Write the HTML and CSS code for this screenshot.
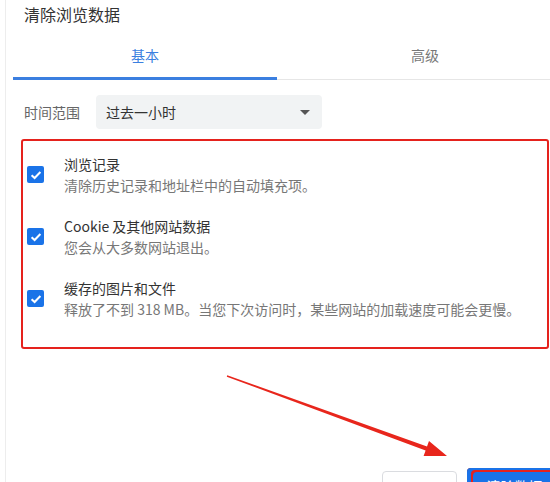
FILE: index.html
```html
<!DOCTYPE html>
<html lang="zh-CN">
<head>
<meta charset="utf-8">
<link rel="stylesheet" href="styles.css">
</head>
<body>
<div class="dialog">
  <h1 class="title">清除浏览数据</h1>
  <div class="tabs">
    <div class="tab active">基本</div>
    <div class="tab tab-wide">高级</div>
  </div>
  <div class="range-row">
    <span class="range-label">时间范围</span>
    <div class="select">
      <span>过去一小时</span>
      <span class="caret"></span>
    </div>
  </div>
  <div class="highlight">
    <div class="item">
      <span class="checkbox"><svg viewBox="0 0 16 16" width="16" height="16"><path d="M3.6 8.2 L6.6 11 L12.4 5" fill="none" stroke="#fff" stroke-width="2"/></svg></span>
      <div class="item-text">
        <div class="item-title">浏览记录</div>
        <div class="item-sub">清除历史记录和地址栏中的自动填充项。</div>
      </div>
    </div>
    <div class="item">
      <span class="checkbox"><svg viewBox="0 0 16 16" width="16" height="16"><path d="M3.6 8.2 L6.6 11 L12.4 5" fill="none" stroke="#fff" stroke-width="2"/></svg></span>
      <div class="item-text">
        <div class="item-title">Cookie 及其他网站数据</div>
        <div class="item-sub">您会从大多数网站退出。</div>
      </div>
    </div>
    <div class="item">
      <span class="checkbox"><svg viewBox="0 0 16 16" width="16" height="16"><path d="M3.6 8.2 L6.6 11 L12.4 5" fill="none" stroke="#fff" stroke-width="2"/></svg></span>
      <div class="item-text">
        <div class="item-title">缓存的图片和文件</div>
        <div class="item-sub">释放了不到 318 MB。当您下次访问时，某些网站的加载速度可能会更慢。</div>
      </div>
    </div>
  </div>
  <div class="footer">
    <button class="btn btn-cancel">取消</button>
    <button class="btn btn-primary">清除数据</button>
  </div>
</div>
<svg class="arrow" width="550" height="482" viewBox="0 0 550 482">
  <polygon points="227.2,375.3 427.0,446.6 429.0,441.0 447,456 423.6,456.0 425.6,450.4 226.8,376.7" fill="#e8261c"/>
</svg>
</body>
</html>
```

FILE: styles.css
```css
html, body {
  margin: 0;
  padding: 0;
  background: #fff;
  width: 550px;
  height: 482px;
  overflow: hidden;
  font-family: "Noto Sans CJK SC", "Noto Sans", sans-serif;
  color: #333;
}

.dialog {
  margin-left: 5px;
  border-left: 1px solid #ededed;
  height: 482px;
  display: flex;
  flex-direction: column;
}

.title {
  margin: 0;
  padding: 2px 0 0 18px;
  font-size: 16px;
  font-weight: 400;
  line-height: 24px;
  color: #333;
}

.tabs {
  display: flex;
  margin: 8px 0 0 7px;
  width: 560px;
  border-bottom: 1px solid #e6e6e6;
}

.tab {
  width: 264px;
  flex-shrink: 0;
  text-align: center;
  font-size: 14px;
  line-height: 20px;
  padding: 11px 0 12px;
  color: #777;
  border-bottom: 3px solid transparent;
  margin-bottom: -1px;
}

.tab-wide {
  width: 296px;
}

.tab.active {
  color: #3b7fe0;
  border-bottom-color: #3b7fe0;
}

.range-row {
  display: flex;
  align-items: center;
  margin: 15px 0 0 18px;
  gap: 16px;
}

.range-label {
  font-size: 14px;
  color: #666;
}

.select {
  box-sizing: border-box;
  width: 226px;
  height: 34px;
  padding: 0 10px 0 10px;
  background: #f1f3f4;
  border-radius: 4px;
  display: flex;
  align-items: center;
  justify-content: space-between;
  font-size: 14px;
  color: #333;
}

.caret {
  width: 0;
  height: 0;
  border-left: 5px solid transparent;
  border-right: 5px solid transparent;
  border-top: 5px solid #555;
  margin-right: 2px;
}

.highlight {
  margin: 10px 0 0 15px;
  width: 522px;
  border: 2.5px solid #e5221d;
  border-radius: 3px;
  padding: 13px 0 28px 2px;
  display: flex;
  flex-direction: column;
  gap: 21px;
}

.item {
  display: flex;
  align-items: center;
}

.checkbox {
  width: 17px;
  height: 17px;
  background: #1a73e8;
  border-radius: 2px;
  display: flex;
  align-items: center;
  justify-content: center;
  margin-right: 20px;
  margin-left: 2px;
}

.item-text {
  display: flex;
  flex-direction: column;
  gap: 1px;
}

.item-title {
  font-size: 14px;
  line-height: 20px;
  color: #333;
}

.item-sub {
  font-size: 14px;
  line-height: 20px;
  color: #777;
}

.footer {
  display: flex;
  justify-content: flex-end;
  align-items: flex-start;
  gap: 10px;
  margin-top: auto;
  height: 14px;
  margin-right: -12px;
}

.btn {
  font-family: "Noto Sans CJK SC", "Noto Sans", sans-serif;
  font-size: 14px;
  height: 36px;
  border-radius: 4px;
  padding: 0 16px;
  flex-shrink: 0;
}

.btn-cancel {
  width: 75px;
  margin-top: 3px;
  background: #fff;
  border: 1px solid #dadce0;
  color: #1a73e8;
}

.btn-primary {
  width: 95px;
  background: #1a73e8;
  color: #fff;
  border: none;
  box-shadow: inset 4px 2px 0 0 #1a73e8, inset 6px 4px 0 0 #e5221d;
}

.arrow {
  position: absolute;
  left: 0;
  top: 0;
  pointer-events: none;
}
```
